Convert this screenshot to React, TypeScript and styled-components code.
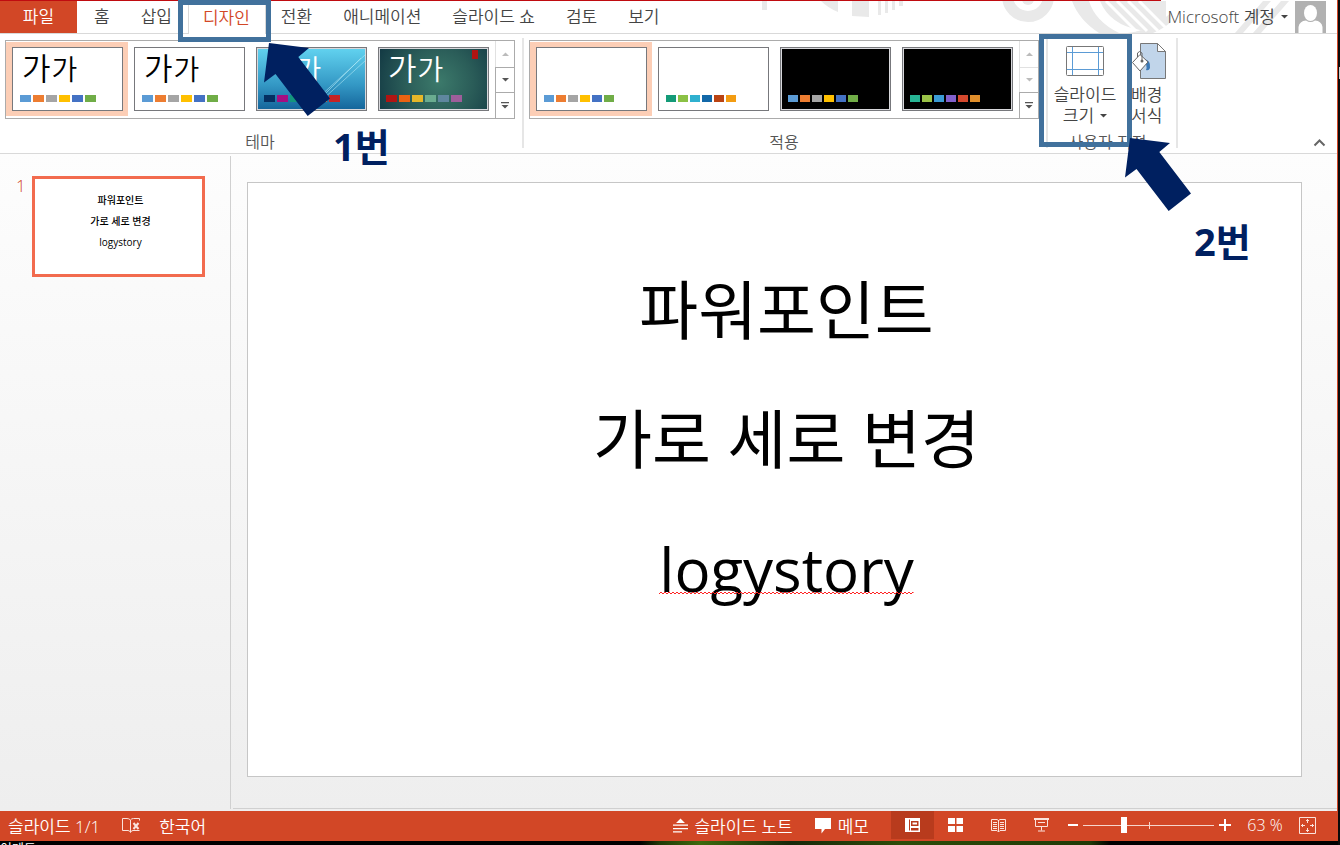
import React from "react";
import styled, { createGlobalStyle, css } from "styled-components";

const Global = createGlobalStyle`
  * { box-sizing: border-box; }
  html, body, #root { height: 100%; }
  body {
    margin: 0;
    overflow: hidden;
    background: #000;
    font-family: "Open Sans", "Noto Sans CJK KR", sans-serif;
    font-size: 17px;
    font-weight: 350;
    color: #444;
  }
  button, input { font: inherit; color: inherit; }
  button { border: 0; padding: 0; margin: 0; background: none; cursor: pointer; }
  h1, h2, p { margin: 0; font-weight: inherit; }
`;

const Desktop = styled.div`
  display: flex;
  flex-direction: column;
  min-height: 100vh;
  padding-right: 2px;
  background: linear-gradient(#ccc, #ccc) right 67px / 1px 12px no-repeat, #0a0a0a;
  background-position: right 67px;
`;

const Window = styled.div`
  flex: 1;
  display: flex;
  flex-direction: column;
  position: relative;
  background: #fff;
  border-right: 1px solid #d24726;
`;

const DesktopStrip = styled.div`
  height: 4px;
  overflow: hidden;
  color: #fff;
  font-size: 13px;
  font-weight: 400;
  line-height: 14px;
  background: linear-gradient(90deg, transparent 640px, #1f3a06 660px, #3c6a0c 700px, #16280a 790px, #2c4c08 900px, #1f3a06 1090px, transparent 1110px), #000;
`;

/* ---------- tab bar ---------- */

const TabBar = styled.header`
  display: flex;
  height: 34px;
  position: relative;
  border-bottom: 1px solid #d9d9d9;
  padding-top: 1px;
`;

const TopLine = styled.div`
  position: absolute;
  top: 0;
  left: 0;
  right: 176px;
  height: 1px;
  background: #c00b10;
`;

const Pattern = styled.svg`
  position: absolute;
  top: 1px;
  right: 0;
`;

const FileTab = styled.button`
  width: 77px;
  background: #d24726;
  color: #fff;
  line-height: 32px;
`;

const Tabs = styled.nav`
  display: flex;
  margin-left: 2px;
`;

const TabSlot = styled.div`
  position: relative;
  display: flex;
`;

const Tab = styled.button<{ $active?: boolean }>`
  padding: 0 16px 0 15px;
  line-height: 32px;
  white-space: nowrap;
  ${(p) =>
    p.$active &&
    css`
      color: #d24726;
      height: 33px;
      background: #fff;
      box-shadow: inset 1px 0 #d9d9d9, inset -1px 0 #d9d9d9;
    `}
`;

const Account = styled.div`
  position: relative;
  display: flex;
  align-items: center;
  gap: 7px;
  margin-left: auto;
  margin-right: 11px;
`;

const AccountButton = styled.button`
  display: flex;
  align-items: center;
  gap: 6px;
  line-height: 32px;
`;

/* ---------- annotations ---------- */

const Frame = styled.div<{ $box: string }>`
  position: absolute;
  inset: ${(p) => p.$box};
  z-index: 3;
  border: 5px solid #41719c;
  pointer-events: none;
`;

const Pointer = styled.svg<{ $left: number; $top: number }>`
  position: absolute;
  left: ${(p) => p.$left}px;
  top: ${(p) => p.$top}px;
  z-index: 4;
  pointer-events: none;
`;

const StepLabel = styled.strong<{ $left: number; $top: number }>`
  position: absolute;
  left: ${(p) => p.$left}px;
  top: ${(p) => p.$top}px;
  z-index: 4;
  font-size: 38px;
  line-height: 44px;
  font-weight: 700;
  color: #002060;
  white-space: nowrap;
`;

function Arrow({ left, top }: { left: number; top: number }) {
  return (
    <Pointer $left={left} $top={top} width="68" height="75" viewBox="0 0 68 75" aria-hidden="true">
      <path d="M6 1 46 6 35.3 15 67 56.5 44.7 74 12.5 32 1 40.500Z" fill="#002060" />
    </Pointer>
  );
}

/* ---------- ribbon ---------- */

const Ribbon = styled.section`
  display: flex;
  position: relative;
  height: 120px;
  padding: 4px 0 5px 5px;
  background: #fff;
  border-bottom: 1px solid #d9d9d9;
`;

const Group = styled.div<{ $pad: string }>`
  position: relative;
  display: flex;
  flex-direction: column;
  justify-content: space-between;
  padding: ${(p) => p.$pad};
  border-right: 2px solid #e6e6e6;
`;

const GroupLabel = styled.div`
  display: flex;
  align-items: center;
  justify-content: center;
  height: 14px;
  font-size: 16px;
  color: #555;
`;

const Gallery = styled.div`
  display: flex;
  height: 79px;
  border: 1px solid #ababab;
`;

const GalleryItem = styled.button<{ $selected?: boolean }>`
  width: 122px;
  padding: 4px 5px 5px 6px;
  margin: 1px 0 2px;
  background: ${(p) => (p.$selected ? "#fcceb6" : "transparent")};
`;

const Preview = styled.span<{ $bg: string; $dark?: boolean }>`
  position: relative;
  display: flex;
  flex-direction: column;
  justify-content: flex-end;
  height: 64px;
  padding: 0 0 8px 6px;
  border: 1px solid #77787c;
  box-shadow: inset 0 0 0 1px ${(p) => (p.$dark ? "#d8d8dc" : "#fff")};
  background: ${(p) => p.$bg};
`;

const Sample = styled.span<{ $light?: boolean }>`
  display: flex;
  align-items: baseline;
  gap: 1px;
  margin: 0 0 8px 3px;
  line-height: 36px;
  font-size: 31px;
  color: ${(p) => (p.$light ? "#fff" : "#000")};
  small { font-size: 28px; }
`;

const Swatches = styled.span`
  position: relative;
  display: flex;
  gap: 2px;
  margin-left: 1px;
`;

const Swatch = styled.i<{ $color: string; $wide?: boolean }>`
  width: ${(p) => (p.$wide ? 11 : 10)}px;
  height: 7px;
  background: ${(p) => p.$color};
`;

const Decoration = styled.svg`
  position: absolute;
  inset: 0;
  width: 100%;
  height: 100%;
`;

const GallerySteps = styled.div`
  display: grid;
  grid-template-rows: 26px 25px 26px;
  width: 19px;
  margin-left: 1px;
`;

const Step = styled.button<{ $off?: boolean }>`
  display: flex;
  align-items: center;
  justify-content: center;
  border-left: 1px solid ${(p) => (p.$off ? "#e1e1e1" : "#ababab")};
  border-top: 1px solid ${(p) => (p.$off ? "#e1e1e1" : "#ababab")};
  color: ${(p) => (p.$off ? "#bbb" : "#555")};
  &:first-child { border-top: 0; }
`;

const Tools = styled.div`
  display: flex;
  gap: 9px;
`;

const ToolButton = styled.button<{ $start?: boolean }>`
  display: flex;
  flex-direction: column;
  align-items: ${(p) => (p.$start ? "flex-start" : "center")};
  line-height: 21px;
  white-space: nowrap;
  svg { flex: none; }
`;

const ToolIcon = styled.span`
  display: flex;
  align-items: center;
  justify-content: center;
  height: 42px;
  margin-bottom: 2px;
`;

const ToolLine = styled.span`
  display: flex;
  align-items: center;
  gap: 6px;
`;

const Collapse = styled.button`
  display: flex;
  align-self: flex-end;
  margin-left: auto;
  margin-right: 11px;
  margin-bottom: 1px;
`;

/* ---------- workspace ---------- */

const Workspace = styled.main`
  flex: 1;
  display: flex;
  padding-top: 2px;
  padding-bottom: 2px;
  background: linear-gradient(#fdfdfd, #eee);
`;

const Outline = styled.aside`
  display: flex;
  align-items: flex-start;
  width: 231px;
  padding: 20px 0 0 16px;
  border-right: 1px solid #d0d0d0;
`;

const SlideNumber = styled.span`
  width: 16px;
  color: #d24726;
  font-size: 17px;
  line-height: 20px;
`;

const Thumb = styled.button`
  display: flex;
  flex-direction: column;
  width: 173px;
  height: 101px;
  padding: 11px 0 0 4px;
  border: 3px solid #f26b4e;
  background: #fff;
  color: #000;
  font-size: 10px;
  line-height: 21px;
  font-weight: 500;
  text-align: center;
  span { display: block; width: 100%; }
`;

const Editor = styled.div`
  flex: 1;
  display: flex;
  margin-left: 2px;
  padding: 26px 35px 31px 14px;
  border-bottom: 1px solid #d0d0d0;
`;

const Slide = styled.article`
  flex: 1;
  padding: 62px 0 0 24px;
  border: 1px solid #c6c6c6;
  background: #fff;
  color: #000;
  font-size: 64px;
  font-weight: 400;
  line-height: 129px;
  text-align: center;
`;

const Misspelled = styled.span`
  position: relative;
  display: inline-block;
  font-size: 60px;
`;

const Squiggle = styled.svg`
  position: absolute;
  left: 0;
  bottom: 39px;
  width: 100%;
  height: 4px;
`;

/* ---------- status bar ---------- */

const StatusBar = styled.footer`
  display: flex;
  align-items: center;
  height: 30px;
  padding: 0 21px 2px 8px;
  background: #d24726;
  color: #fff;
  white-space: nowrap;
`;

const StatusButton = styled.button<{ $gap?: number }>`
  display: flex;
  align-items: center;
  gap: 6px;
  height: 28px;
  margin-right: ${(p) => p.$gap ?? 0}px;
`;

const ViewButton = styled.button<{ $on?: boolean }>`
  display: flex;
  align-items: center;
  justify-content: center;
  width: 43px;
  height: 28px;
  background: ${(p) => (p.$on ? "#b83b1d" : "transparent")};
`;

const Spring = styled.div`
  flex: 1;
`;

const Zoom = styled.label`
  position: relative;
  display: flex;
  align-items: center;
  width: 131px;
  margin: 0 5px 0 4px;
  &::after {
    content: "";
    position: absolute;
    left: 50%;
    width: 1px;
    height: 7px;
    background: #f6d5cc;
  }
`;

const Range = styled.input`
  appearance: none;
  width: 100%;
  height: 18px;
  margin: 0;
  background: linear-gradient(#f6d5cc, #f6d5cc) center / 100% 1px no-repeat;
  &::-webkit-slider-thumb {
    appearance: none;
    width: 6px;
    height: 16px;
    background: #fff;
  }
`;

const Percent = styled.output`
  width: 68px;
  text-align: center;
  font-size: 16px;
`;

const Caret = ({ up }: { up?: boolean }) => (
  <svg width="7" height="4" viewBox="0 0 7 4" aria-hidden="true">
    <path d={up ? "M0 4h7L3.500 0.500z" : "M0 0h7L3.500 3.500z"} fill="currentColor" />
  </svg>
);

const office = ["#5b9bd5", "#ed7d31", "#a5a5a5", "#ffc000", "#4472c4", "#70ad47"];

type Item = {
  name: string;
  bg: string;
  dark?: boolean;
  light?: boolean;
  selected?: boolean;
  colors: string[];
  art?: React.ReactNode;
};

const themes: Item[] = [
  { name: "Office 테마", bg: "#fff", selected: true, colors: office },
  { name: "흰색 테마", bg: "#fff", colors: office },
  {
    name: "파란색 테마",
    bg: "linear-gradient(#62d3f0, #3397c4 60%, #14649a)",
    dark: true,
    light: true,
    colors: ["#052f61", "#a50e82", "#14967c", "#6a9e1f", "#e87d37", "#c62324"],
    art: <path d="M48 62 109 6M54 62 109 12M66 48 104 10" stroke="#b9ecf8" strokeOpacity=".55" fill="none" />,
  },
  {
    name: "녹색 테마",
    bg: "radial-gradient(circle at 55% 55%, #3c7a6b, #2a5c58 50%, #123843)",
    dark: true,
    light: true,
    colors: ["#b01513", "#ea6312", "#e6b729", "#6aac90", "#5f879f", "#9e5e9b"],
    art: <path d="M93 2h6v9h-6z" fill="#b01513" />,
  },
];

const variants: Item[] = [
  { name: "적용 1", bg: "#fff", selected: true, colors: office },
  { name: "적용 2", bg: "#fff", colors: ["#149b78", "#8bc145", "#2fb0cf", "#1268a8", "#ba4312", "#f39c12"] },
  { name: "적용 3", bg: "#000", dark: true, colors: office },
  { name: "적용 4", bg: "#000", dark: true, colors: ["#27b494", "#9bc348", "#3b9bd4", "#8260cb", "#d4482d", "#e08e2b"] },
];

function GalleryView({ items, sample, atTop }: { items: Item[]; sample?: boolean; atTop?: boolean }) {
  return (
    <Gallery>
      {items.map((it) => (
        <GalleryItem key={it.name} $selected={it.selected} aria-label={it.name}>
          <Preview $bg={it.bg} $dark={it.dark}>
            {it.art && <Decoration viewBox="0 0 109 62">{it.art}</Decoration>}
            {sample && (
              <Sample $light={it.light}>
                가<small>가</small>
              </Sample>
            )}
            <Swatches>
              {it.colors.map((c) => (
                <Swatch key={c} $color={c} $wide={sample} />
              ))}
            </Swatches>
          </Preview>
        </GalleryItem>
      ))}
      <GallerySteps>
        <Step $off aria-label="위로"><Caret up /></Step>
        <Step $off={atTop} aria-label="아래로"><Caret /></Step>
        <Step aria-label="자세히">
          <svg width="8" height="8" viewBox="0 0 8 8" aria-hidden="true">
            <path d="M0 0h8v1.200H0zM0.500 3h7L4 6.500z" fill="currentColor" />
          </svg>
        </Step>
      </GallerySteps>
    </Gallery>
  );
}

const tabsBefore = ["홈", "삽입"];
const tabsAfter = ["전환", "애니메이션", "슬라이드 쇼", "검토", "보기"];

export default function App() {
  return (
    <Desktop>
      <Global />
      <Window>
        <TabBar>
          <Pattern width="590" height="32" viewBox="747 1 590 32" fill="#e9e9e9" aria-hidden="true">
            <path d="M762 1h5v9h-5zM821 1h17v11q-10-4-17-11zM852 1h17v16l-17-1zM878 1h3v14h-3zM885 1h3v12h-3zM892 1h3v9h-3zM899 1h4v5h-4z" />
            <circle cx="1028" cy="-4" r="20.500" fill="none" stroke="#e9e9e9" strokeWidth="11" />
            <circle cx="1028" cy="-1" r="6" />
            <path d="M1072 1h17q6 20 30 32h-20q-20-13-27-32zM1100 1h66v24q-12 6-26 5-30-5-40-29zM1119 33q25 2 52-20v9q-8 7-18 11zM1235 33l28-32h8l-28 32zM1253 33l28-32h8l-28 32z" />
            <path d="M1106 1 1136 31M1117 1 1147 31M1128 1 1158 31M1139 1 1166 28" stroke="#fff" strokeWidth="3" />
          </Pattern>
          <TopLine />
          <FileTab>파일</FileTab>
          <Tabs>
            {tabsBefore.map((t) => (
              <Tab key={t}>{t}</Tab>
            ))}
            <TabSlot>
              <Tab $active>디자인</Tab>
              <Frame $box="-1px -5px -9px -10px" />
              <Arrow left={75} top={41} />
              <StepLabel $left={145} $top={123}>1번</StepLabel>
            </TabSlot>
            {tabsAfter.map((t) => (
              <Tab key={t}>{t}</Tab>
            ))}
          </Tabs>
          <Account>
            <AccountButton>
              Microsoft 계정 <Caret />
            </AccountButton>
            <svg width="31" height="32" viewBox="0 0 31 32" aria-hidden="true">
              <path d="M0 0h31v32H0z" fill="#b1b1b1" />
              <ellipse cx="15.500" cy="12" rx="6.500" ry="8" fill="#fff" />
              <path d="M3.500 32v-6q1-6 7.500-6.500 4.500 3 9 0 6.500.5 7.500 6.500v6z" fill="#fff" />
            </svg>
          </Account>
        </TabBar>

        <Ribbon>
          <Group $pad="2px 7px 0 0">
            <GalleryView items={themes} sample />
            <GroupLabel>테마</GroupLabel>
          </Group>
          <Group $pad="2px 7px 0 5px">
            <GalleryView items={variants} atTop />
            <GroupLabel>적용</GroupLabel>
          </Group>
          <Group $pad="2px 9px 0 0">
            <Tools>
              <ToolButton>
                <ToolIcon>
                  <svg width="74" height="32" viewBox="2 0 74 32" fill="none" aria-hidden="true">
                    <rect x="20.500" y="1.500" width="37" height="29" rx="1" stroke="#777" fill="#fff" />
                    <path d="M21 7.500h36M21 24.500h36M26.500 2v28M52.500 2v28" stroke="#5b9bd5" />
                  </svg>
                </ToolIcon>
                <ToolLine>슬라이드</ToolLine>
                <ToolLine>크기 <Caret /></ToolLine>
              </ToolButton>
              <ToolButton $start>
                <ToolIcon>
                  <svg width="36" height="38" viewBox="0 0 36 38" aria-hidden="true">
                    <path d="M9.500 1.500h17l8 8v27h-25z" fill="#c1d5ea" stroke="#777" />
                    <path d="M26.500 1.500v8h8z" fill="#fff" stroke="#777" />
                    <path d="M13 17q7 1 6 9-1 3-4 2 2-5-3-10z" fill="#3b78b5" />
                    <path d="M1.500 20.500 9 12.500l8 7.500-8 9z" fill="#fff" stroke="#666" />
                    <path d="M6.500 15v-4q2-3 4.500 0v7" fill="none" stroke="#666" />
                    <circle cx="11" cy="19" r="1.500" fill="#666" />
                  </svg>
                </ToolIcon>
                <ToolLine>배경</ToolLine>
                <ToolLine>서식</ToolLine>
              </ToolButton>
            </Tools>
            <GroupLabel>사용자 지정</GroupLabel>
            <Frame $box="-4px 44px 1px -9px" />
            <Arrow left={76} top={99} />
            <StepLabel $left={146} $top={181}>2번</StepLabel>
          </Group>
          <Collapse aria-label="리본 메뉴 축소">
            <svg width="13" height="9" viewBox="0 0 13 9" fill="none" aria-hidden="true">
              <path d="M1.500 7.500 6.500 2.500l5 5" stroke="#666" strokeWidth="2" />
            </svg>
          </Collapse>
        </Ribbon>

        <Workspace>
          <Outline>
            <SlideNumber>1</SlideNumber>
            <Thumb>
              <span>파워포인트</span>
              <span>가로 세로 변경</span>
              <span>logystory</span>
            </Thumb>
          </Outline>
          <Editor>
            <Slide>
              <p>파워포인트</p>
              <p>가로 세로 변경</p>
              <p>
                <Misspelled>
                  logystory
                  <Squiggle aria-hidden="true">
                    <defs>
                      <pattern id="wave" width="4" height="4" patternUnits="userSpaceOnUse">
                        <path d="M0 3 2 1l2 2" fill="none" stroke="#f22" />
                      </pattern>
                    </defs>
                    <rect width="100%" height="4" fill="url(#wave)" />
                  </Squiggle>
                </Misspelled>
              </p>
            </Slide>
          </Editor>
        </Workspace>

        <StatusBar>
          <StatusButton $gap={21}>슬라이드 1/1</StatusButton>
          <StatusButton $gap={18} aria-label="맞춤법 검사">
            <svg width="20" height="17" viewBox="0 0 20 17" fill="none" stroke="#fbe3dc" aria-hidden="true">
              <path d="M9.500 15V3Q8 1.500 6 1.500H1.500v12H7q2 0 2.500 2 .5-2 2.500-2h6.500M9.500 3q1-1.500 3-1.500h6v2" />
              <path d="m12.500 6 5 6m0-6-5 6" strokeWidth="2" />
            </svg>
          </StatusButton>
          <StatusButton>한국어</StatusButton>
          <Spring />
          <StatusButton $gap={22}>
            <svg width="15" height="15" viewBox="0 0 15 15" fill="#fff" aria-hidden="true">
              <path d="M3 5h9L7.500 0.500zM0 6.500h15v1.200H0zM0 10h15v1.200H0zM0 13.300h9v1.200H0z" />
            </svg>
            슬라이드 노트
          </StatusButton>
          <StatusButton $gap={22}>
            <svg width="17" height="17" viewBox="0 0 17 17" fill="#fff" aria-hidden="true">
              <path d="M0 1h16v11h-6l-3.500 4.500V12H0z" />
            </svg>
            메모
          </StatusButton>
          <ViewButton $on aria-label="기본">
            <svg width="15" height="14" viewBox="0 0 15 14" aria-hidden="true">
              <path d="M0 0h15v14H0z" fill="#fff" />
              <path d="M4 1.500h1v11H4zM6 3h7.500v5H6zM6 10h7.500v2.500H6z" fill="#b83b1d" />
              <path d="M7.500 4.500h4.500v2H7.500z" fill="#fff" />
            </svg>
          </ViewButton>
          <ViewButton aria-label="여러 슬라이드">
            <svg width="15" height="14" viewBox="0 0 15 14" fill="#fff" aria-hidden="true">
              <path d="M0 0h7v6H0zM8.500 0h6.500v6H8.500zM0 8h7v6H0zM8.500 8h6.500v6H8.500z" />
            </svg>
          </ViewButton>
          <ViewButton aria-label="읽기용 보기">
            <svg width="15" height="15" viewBox="0 0 15 15" fill="none" stroke="#fbe3dc" aria-hidden="true">
              <path d="M.5 1.500h5.500l1.500 1 1.500-1h5.500v11H9l-1.500 1.500L6 12.500H.500zM7.500 2v12M2 4.500h4M2 6.500h4M2 8.500h4M2 10.500h4M9 4.500h4M9 6.500h4M9 8.500h4M9 10.500h4" />
            </svg>
          </ViewButton>
          <ViewButton aria-label="슬라이드 쇼">
            <svg width="15" height="14" viewBox="0 0 15 14" fill="none" stroke="#fbe3dc" aria-hidden="true">
              <path d="M0 1h15" strokeWidth="2" />
              <path d="M1.500 1v7.500h12V1M4 4.500h7M7.500 8.500v4M4 13h7" />
            </svg>
          </ViewButton>
          <StatusButton aria-label="축소">
            <svg width="16" height="12" viewBox="0 0 16 12" aria-hidden="true">
              <path d="M5 5h10v2H5z" fill="#fff" />
            </svg>
          </StatusButton>
          <Zoom>
            <Range type="range" aria-label="확대/축소" min={0} max={100} defaultValue={30} />
          </Zoom>
          <StatusButton aria-label="확대">
            <svg width="12" height="12" viewBox="0 0 12 12" aria-hidden="true">
              <path d="M0 5h5V0h2v5h5v2H7v5H5V7H0z" fill="#fff" />
            </svg>
          </StatusButton>
          <Percent>63 %</Percent>
          <StatusButton aria-label="창에 맞춤">
            <svg width="17" height="17" viewBox="0 0 17 17" fill="none" stroke="#fbe3dc" aria-hidden="true">
              <path d="M.5.5h16v16H.500zM8.500 2v4M8.500 11v4M2 8.500h4M11 8.500h4M7 3.500h3M7 13.500h3M3.500 7v3M13.500 7v3" />
            </svg>
          </StatusButton>
        </StatusBar>
      </Window>
      <DesktopStrip>이메드</DesktopStrip>
    </Desktop>
  );
}
